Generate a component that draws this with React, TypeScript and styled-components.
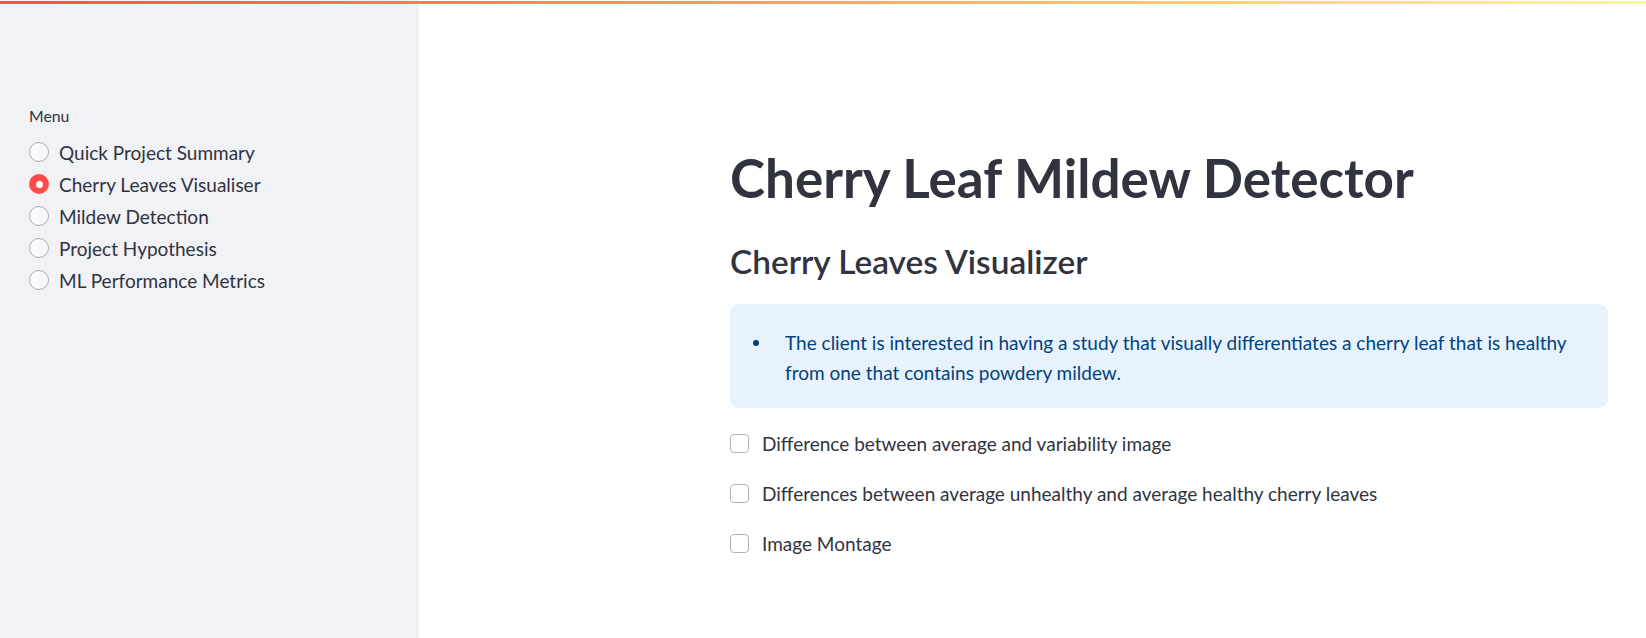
import React from "react";
import styled, { createGlobalStyle } from "styled-components";

const GlobalStyle = createGlobalStyle`
  html, body { margin: 0; padding: 0; background: #ffffff; }
  body { font-family: Lato, "Liberation Sans", sans-serif; color: #31333f; }
  * { box-sizing: border-box; }
`;

const Decoration = styled.div`
  position: fixed;
  top: 1px;
  left: 0;
  right: 0;
  height: 3px;
  background: linear-gradient(90deg, rgb(255, 75, 75), rgb(255, 253, 128));
  z-index: 10;
`;

const Shell = styled.div`
  display: flex;
  height: 638px;
  overflow: hidden;
`;

const Sidebar = styled.aside`
  width: 419px;
  flex: 0 0 419px;
  background: #f0f2f6;
  padding: 104px 0 0 29px;
  display: flex;
  flex-direction: column;
`;

const MenuLabel = styled.div`
  font-size: 15.8px;
  line-height: 24px;
  height: 24px;
  color: #31333f;
  margin-bottom: 8px;
`;

const RadioGroup = styled.div`
  display: flex;
  flex-direction: column;
`;

const RadioRow = styled.label`
  display: flex;
  align-items: center;
  height: 32px;
  gap: 10px;
  font-size: 19px;
  color: #31333f;
  cursor: pointer;
`;

const RadioDot = styled.span<{ $checked?: boolean }>`
  width: 20px;
  height: 20px;
  flex: 0 0 20px;
  border-radius: 50%;
  background: ${(p) => (p.$checked ? "#ff4b4b" : "#f9f9fb")};
  border: ${(p) => (p.$checked ? "none" : "1px solid #a9abb3")};
  display: flex;
  align-items: center;
  justify-content: center;
  &::after {
    content: "";
    display: ${(p) => (p.$checked ? "block" : "none")};
    width: 7px;
    height: 7px;
    border-radius: 50%;
    background: #ffffff;
  }
`;

const Main = styled.main`
  flex: 1;
  padding: 147px 38px 0 311px;
  display: flex;
  flex-direction: column;
`;

const Title = styled.h1`
  margin: 0;
  font-size: 53px;
  line-height: 62px;
  font-weight: 700;
  color: #31333f;
`;

const Subheader = styled.h3`
  margin: 32px 0 0;
  font-size: 33.4px;
  line-height: 40px;
  font-weight: 600;
  color: #31333f;
`;

const InfoBox = styled.div`
  margin-top: 23px;
  background: #e8f2fc;
  border-radius: 9px;
  padding: 24px 16px 21px 16px;
  color: #004280;
`;

const BulletList = styled.ul`
  margin: 0;
  padding: 0 0 0 39px;
  list-style: none;
`;

const BulletItem = styled.li`
  position: relative;
  font-size: 19px;
  line-height: 29.5px;
  &::before {
    content: "";
    position: absolute;
    left: -32px;
    top: 12px;
    width: 6px;
    height: 6px;
    border-radius: 50%;
    background: #004280;
  }
`;

const CheckList = styled.div`
  margin-top: 10px;
  display: flex;
  flex-direction: column;
`;

const CheckRow = styled.label`
  display: flex;
  align-items: center;
  height: 50px;
  gap: 13px;
  font-size: 19px;
  color: #31333f;
  cursor: pointer;
`;

const CheckBox = styled.span`
  width: 19px;
  height: 19px;
  flex: 0 0 19px;
  border: 1px solid #b3b4ba;
  border-radius: 4px;
  background: #ffffff;
`;

const menuItems = [
  "Quick Project Summary",
  "Cherry Leaves Visualiser",
  "Mildew Detection",
  "Project Hypothesis",
  "ML Performance Metrics",
];

const checks = [
  "Difference between average and variability image",
  "Differences between average unhealthy and average healthy cherry leaves",
  "Image Montage",
];

export default function App() {
  return (
    <>
      <GlobalStyle />
      <Decoration />
      <Shell>
        <Sidebar>
          <MenuLabel>Menu</MenuLabel>
          <RadioGroup>
            {menuItems.map((m, i) => (
              <RadioRow key={m}>
                <RadioDot $checked={i === 1} />
                {m}
              </RadioRow>
            ))}
          </RadioGroup>
        </Sidebar>
        <Main>
          <Title>Cherry Leaf Mildew Detector</Title>
          <Subheader>Cherry Leaves Visualizer</Subheader>
          <InfoBox>
            <BulletList>
              <BulletItem>
                The client is interested in having a study that visually differentiates a cherry leaf that is healthy
                from one that contains powdery mildew.
              </BulletItem>
            </BulletList>
          </InfoBox>
          <CheckList>
            {checks.map((c) => (
              <CheckRow key={c}>
                <CheckBox />
                {c}
              </CheckRow>
            ))}
          </CheckList>
        </Main>
      </Shell>
    </>
  );
}
